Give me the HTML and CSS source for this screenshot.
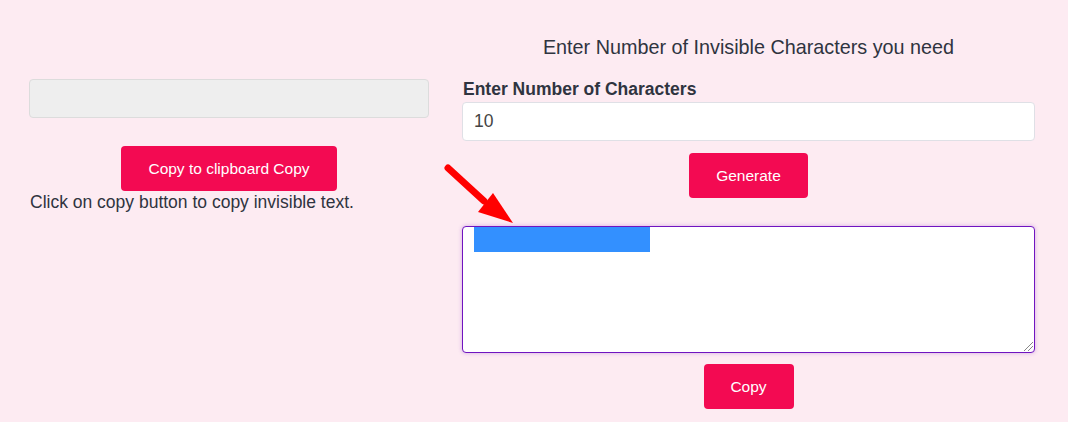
FILE: index.html
```html
<!DOCTYPE html>
<html>
<head>
<meta charset="utf-8">
<link rel="stylesheet" href="styles.css">
</head>
<body>
<div class="page">
  <div class="left">
    <div class="readonly-box"></div>
    <div class="btn-row">
      <button class="btn btn-clip">Copy to clipboard Copy</button>
    </div>
    <p class="hint">Click on copy button to copy invisible text.</p>
  </div>
  <div class="right">
    <h3 class="title">Enter Number of Invisible Characters you need</h3>
    <label class="label">Enter Number of Characters</label>
    <div class="num-input">10</div>
    <div class="btn-row">
      <button class="btn btn-gen">Generate</button>
    </div>
    <div class="output">
      <span class="selection"></span>
      <span class="grip"></span>
    </div>
    <div class="btn-row">
      <button class="btn btn-copy">Copy</button>
    </div>
  </div>
  <svg class="arrow" width="80" height="70" viewBox="0 0 80 70">
    <line x1="4" y1="4" x2="40" y2="37" stroke="#ff0000" stroke-width="7" stroke-linecap="round"/>
    <polygon points="49,29 34,48 69,59" fill="#ff0000"/>
  </svg>
</div>
</body>
</html>
```
FILE: styles.css
```css
* { box-sizing: border-box; }
html, body { margin: 0; padding: 0; }
body {
  background: #fdebf2;
  font-family: "Liberation Sans", Arial, sans-serif;
  color: #2f3440;
  width: 1068px;
  height: 422px;
  overflow: hidden;
}
.page {
  position: relative;
  display: flex;
  align-items: flex-start;
  gap: 33px;
  padding: 0 33px 0 29px;
}
.left {
  width: 400px;
  padding-top: 79px;
}
.readonly-box {
  height: 39px;
  background: #eeeeee;
  border: 1px solid #dcdcdc;
  border-radius: 4px;
}
.btn-row {
  display: flex;
  justify-content: center;
}
.left .btn-row { margin-top: 28px; }
.btn {
  background: #f30a52;
  color: #ffffff;
  border: none;
  border-radius: 4px;
  font-family: "Liberation Sans", Arial, sans-serif;
  font-size: 15.5px;
  height: 45px;
  padding: 0 27px;
  cursor: pointer;
}
.hint {
  margin: 0 0 0 1px;
  font-size: 17.5px;
  line-height: 23px;
}
.right {
  width: 573px;
  padding-top: 35px;
}
.title {
  margin: 0 0 19px;
  font-size: 19.8px;
  font-weight: normal;
  text-align: center;
  line-height: 25px;
}
.label {
  display: block;
  font-weight: bold;
  font-size: 17.5px;
  line-height: 21px;
  margin: 0 0 2px 1px;
}
.num-input {
  height: 39px;
  background: #ffffff;
  border: 1px solid #dfe0e6;
  border-radius: 4px;
  padding: 0 11px;
  font-size: 17.5px;
  line-height: 37px;
  color: #444;
}
.btn-gen { margin-top: 12px; }
.output {
  position: relative;
  margin-top: 28px;
  height: 127px;
  background: #ffffff;
  border: 1px solid #7014c0;
  border-radius: 4px;
  box-shadow: 0 0 4px rgba(112, 20, 192, 0.3);
}
.selection {
  position: absolute;
  left: 11px;
  top: 0;
  width: 176px;
  height: 25px;
  background: #3390ff;
}
.grip {
  position: absolute;
  right: 1px;
  bottom: 1px;
  width: 9px;
  height: 9px;
  background: linear-gradient(135deg, transparent 45%, #888 45%, #888 52%, transparent 52%, transparent 70%, #888 70%, #888 77%, transparent 77%);
}
.output + .btn-row { margin-top: 11px; }
.btn-copy { padding: 0; width: 90px; }
.arrow {
  position: absolute;
  left: 444px;
  top: 164px;
}
```
